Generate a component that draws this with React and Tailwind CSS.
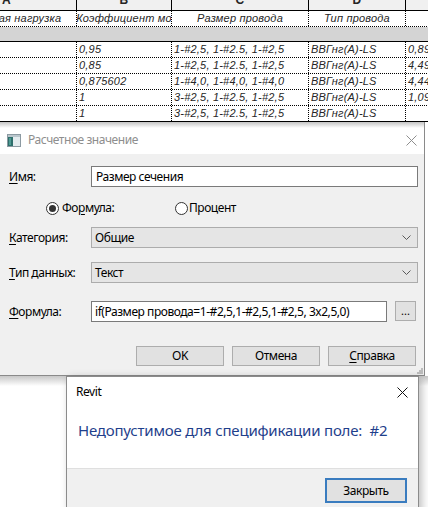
import React from "react";

const COLS = ["w-[140px]", "w-[95px]", "w-[137px]", "w-[97px]", "w-[60px]"];

const rows = [
  ["", "0,95", "1-#2,5, 1-#2.5, 1-#2,5", "ВВГнг(А)-LS", "0,89"],
  ["", "0,85", "1-#2,5, 1-#2.5, 1-#2,5", "ВВГнг(А)-LS", "4,49"],
  ["", "0,875602", "1-#4,0, 1-#4,0, 1-#4,0", "ВВГнг(А)-LS", "4,44"],
  ["", "1", "3-#2,5, 1-#2.5, 1-#2,5", "ВВГнг(А)-LS", "1,09"],
  ["", "1", "3-#2,5, 1-#2.5, 1-#2,5", "ВВГнг(А)-LS", ""],
];

function Table() {
  return (
    <div className="-ml-[63px] w-[540px] font-['Liberation_Sans',sans-serif] italic text-[11px] text-[#262626] tracking-[0.2px]">
      {/* letters */}
      <div className="flex h-[11px] border-b border-black bg-[#f0f0f0] not-italic">
        {["A", "B", "C", "D", ""].map((l, i) => (
          <div
            key={i}
            className={`${COLS[i]} ${i < 4 ? "border-r border-black" : ""} flex justify-center overflow-hidden`}
          >
            <span className="-mt-[6px] leading-[12px] text-[12px] font-bold">{l}</span>
          </div>
        ))}
      </div>
      {/* titles */}
      <div className="flex h-[16px] border-b border-dotted border-black">
        {["Расчетная нагрузка", "Коэффициент мо", "Размер провода", "Тип провода", ""].map((t, i) => (
          <div
            key={i}
            className={`${COLS[i]} ${i < 4 ? "border-r border-dotted border-black" : ""} flex items-center justify-center overflow-hidden whitespace-nowrap`}
          >
            {t}
          </div>
        ))}
      </div>
      {/* band */}
      <div className="h-[15px] bg-[#d4d4d4] border-b border-black" />
      {rows.map((r, ri) => (
        <div
          key={ri}
          className={`flex h-[16px] border-b ${ri === rows.length - 1 ? "border-solid border-black" : "border-dotted border-black"}`}
        >
          {r.map((c, i) => (
            <div
              key={i}
              className={`${COLS[i]} ${i < 4 ? "border-r border-dotted border-black" : ""} flex items-center pl-[2px] overflow-hidden whitespace-nowrap`}
            >
              {c}
            </div>
          ))}
        </div>
      ))}
    </div>
  );
}

function Chevron() {
  return (
    <svg width="9" height="6" viewBox="0 0 9 6" className="shrink-0">
      <polyline points="0.5,0.5 4.5,4.5 8.5,0.5" fill="none" stroke="#5a5a5a" strokeWidth="1" />
    </svg>
  );
}

function Radio({ checked }) {
  return (
    <span className="w-[13px] h-[13px] rounded-full border border-[#333] bg-white flex items-center justify-center shrink-0">
      {checked && <span className="w-[7px] h-[7px] rounded-full bg-[#333]" />}
    </span>
  );
}

function Label({ children }) {
  return <div className="w-[82px] shrink-0 flex items-center">{children}</div>;
}

function Btn({ children, className = "" }) {
  return (
    <div
      className={`w-[88px] h-[20px] bg-[#e1e1e1] border border-[#adadad] flex items-center justify-center ${className}`}
    >
      {children}
    </div>
  );
}

function CalcDialog() {
  return (
    <div className="absolute left-[-4px] top-[122px] w-[429px] h-[254px] flex flex-col border-r border-b border-[#8a8a8a] font-['Noto_Sans',sans-serif] text-[12px] tracking-[-0.45px] text-black">
      {/* title bar */}
      <div className="h-[32px] shrink-0 bg-[linear-gradient(to_bottom,#c4c4c4_0px,#ffffff_6px)] flex items-center pt-[4px] pl-[11px] pr-[7px]">
        <svg width="14" height="13" viewBox="0 0 14 13" className="shrink-0">
          <rect x="0.5" y="0.5" width="13" height="12" fill="#e3ebee" stroke="#8c9aa2" />
          <rect x="1" y="1" width="12" height="2" fill="#b9c6cc" />
          <rect x="1" y="3" width="5" height="9" fill="#2f6f6c" />
          <rect x="2" y="4" width="2" height="7" fill="#4f9a93" />
        </svg>
        <span className="ml-[7px] text-[#8e8e8e] leading-none">Расчетное значение</span>
        <div className="flex-1" />
        <svg width="11" height="11" viewBox="0 0 11 11">
          <path d="M0.5 0.5 L10.5 10.5 M10.5 0.5 L0.5 10.5" stroke="#8e8e8e" strokeWidth="1" />
        </svg>
      </div>
      {/* body */}
      <div className="relative flex-1 bg-[#f0f0f0] pl-[13px] pr-[6px] pt-[12px] flex flex-col">
        <div className="flex h-[21px]">
          <Label>
            <span>
              <u className="underline-offset-2">И</u>мя:
            </span>
          </Label>
          <div className="flex-1 bg-white border border-[#7a7a7a] flex items-center pl-[4px]">
            Размер сечения
          </div>
        </div>
        <div className="flex h-[16px] mt-[13px] items-center pl-[37px]">
          <div className="w-[129px] flex items-center gap-[3px]">
            <Radio checked />
            <span>
              Фо<u className="underline-offset-2">р</u>мула:
            </span>
          </div>
          <div className="flex items-center gap-[1px]">
            <Radio />
            <span>Процент</span>
          </div>
        </div>
        <div className="flex h-[21px] mt-[11px]">
          <Label>
            <span>
              <u className="underline-offset-2">К</u>атегория:
            </span>
          </Label>
          <div className="flex-1 bg-[#e5e5e5] border border-[#acacac] flex items-center pl-[3px] pr-[6px]">
            <span className="flex-1">Общие</span>
            <Chevron />
          </div>
        </div>
        <div className="flex h-[21px] mt-[14px]">
          <Label>
            <span>
              <u className="underline-offset-2">Т</u>ип данных:
            </span>
          </Label>
          <div className="flex-1 bg-[#e5e5e5] border border-[#acacac] flex items-center pl-[3px] pr-[6px]">
            <span className="flex-1">Текст</span>
            <Chevron />
          </div>
        </div>
        <div className="flex h-[21px] mt-[18px]">
          <Label>
            <span>
              <u className="underline-offset-2">Ф</u>ормула:
            </span>
          </Label>
          <div className="w-[296px] bg-white border border-[#7a7a7a] flex items-center pl-[3px] whitespace-nowrap overflow-hidden">
            if(Размер провода=1-#2,5,1-#2,5,1-#2,5, 3x2,5,0)
          </div>
          <div className="ml-[8px] w-[21px] h-[20px] bg-[#e1e1e1] border border-[#adadad] flex items-center justify-center text-[11px] leading-none pb-[2px] tracking-normal">
            ...
          </div>
        </div>
        <div className="flex mt-[24px] justify-end gap-[8px] pr-[2px]">
          <Btn>OK</Btn>
          <Btn>Отмена</Btn>
          <Btn>
            <span>
              <u className="underline-offset-2">С</u>правка
            </span>
          </Btn>
        </div>
        {/* size grip */}
        <svg width="6" height="6" viewBox="0 0 6 6" className="absolute right-[1px] bottom-[1px]">
          <rect x="4" y="0" width="2" height="2" fill="#bdbdbd" />
          <rect x="2" y="2" width="2" height="2" fill="#bdbdbd" />
          <rect x="4" y="2" width="2" height="2" fill="#bdbdbd" />
          <rect x="0" y="4" width="2" height="2" fill="#bdbdbd" />
          <rect x="2" y="4" width="2" height="2" fill="#bdbdbd" />
          <rect x="4" y="4" width="2" height="2" fill="#bdbdbd" />
        </svg>
      </div>
    </div>
  );
}

function RevitDialog() {
  return (
    <div className="absolute left-[66px] top-[376px] w-[353px] h-[140px] border-l border-r border-t border-[#8b8b8b] flex flex-col font-['Noto_Sans',sans-serif] text-[12px] tracking-[-0.45px] text-black shadow-[3px_2px_8px_rgba(0,0,0,0.25)]">
      <div className="h-[91px] bg-white flex flex-col pl-[9px] pr-[10px]">
        <div className="flex items-center mt-[7px] h-[16px]">
          <span className="flex-1 leading-none">Revit</span>
          <svg width="11" height="11" viewBox="0 0 11 11">
            <path d="M0.5 0.5 L10.5 10.5 M10.5 0.5 L0.5 10.5" stroke="#111" strokeWidth="1" />
          </svg>
        </div>
        <div className="mt-[19px] pl-[2px] text-[15px] tracking-[-0.2px] leading-[22px] text-[#1f3f8c] whitespace-nowrap">
          Недопустимое для спецификации поле:&nbsp; #2
        </div>
      </div>
      <div className="flex-1 bg-[#f0f0f0] border-t border-[#dfdfdf] flex justify-end pt-[9px] pr-[11px]">
        <div className="w-[82px] h-[25px] bg-[#e1e1e1] border-2 border-[#3a7cbf] flex items-center justify-center">
          Закрыть
        </div>
      </div>
    </div>
  );
}

export default function App() {
  return (
    <div className="relative w-[428px] h-[507px] overflow-hidden bg-white">
      <Table />
      <div className="absolute left-0 top-[376px] w-[428px] h-[10px] bg-[linear-gradient(to_bottom,#c8c8c8,#ffffff)]" />
      <CalcDialog />
      <RevitDialog />
    </div>
  );
}
